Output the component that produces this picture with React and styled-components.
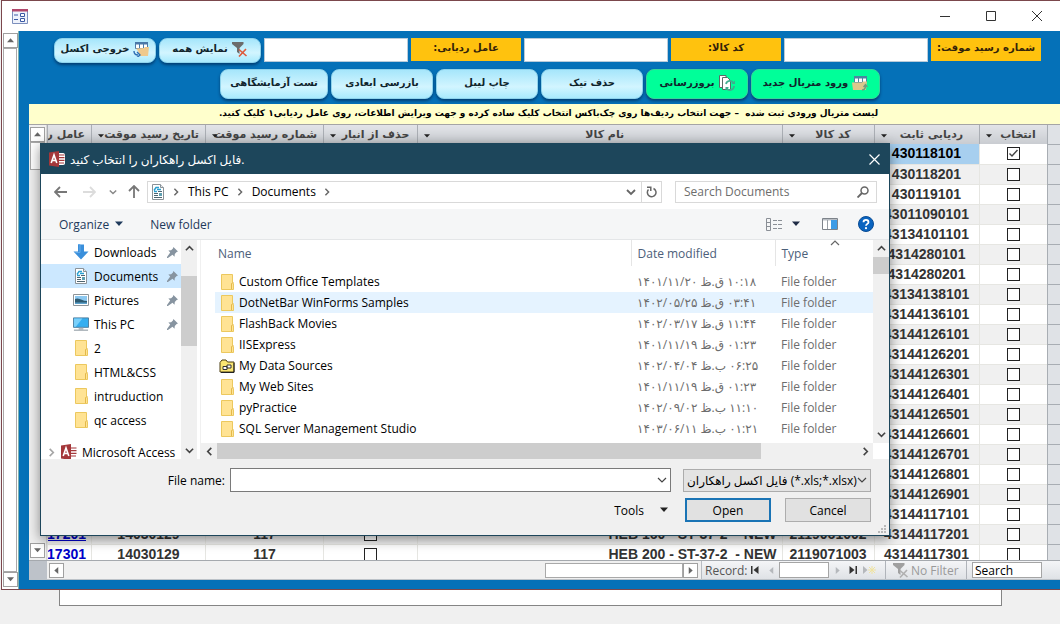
import React, { useState } from 'react'
import styled, { createGlobalStyle } from 'styled-components'

const uiFont = '"Open Sans", "DejaVu Sans", sans-serif'
const persianFont = '"DejaVu Sans", sans-serif'

const GlobalStyle = createGlobalStyle`
  * {
    box-sizing: border-box;
  }
  body {
    margin: 0;
    background: #f0f0f0;
    font-family: ${uiFont};
    font-size: 12px;
    color: #000;
  }
  button, input, select {
    font: inherit;
    color: inherit;
    margin: 0;
  }
`

const Page = styled.div`
  position: relative;
  min-height: 100vh;
  overflow: hidden;
`

const AppWindow = styled.main`
  display: flex;
  flex-direction: column;
  height: calc(100vh - 34px);
  margin-left: 1px;
  border: 1px solid #7b474c;
  border-right: 0;
  background: #fff;
`

const BackPanel = styled.div`
  height: 16px;
  margin: 0 58px 0 59px;
  background: #fff;
  border: 1px solid #858585;
  border-top: 0;
`

const TitleBar = styled.header`
  display: flex;
  align-items: center;
  height: 30px;
  flex: none;
  padding-left: 10px;
`

const WindowButtons = styled.div`
  display: flex;
  margin-left: auto;
`

const WindowButton = styled.button`
  display: flex;
  align-items: center;
  justify-content: center;
  width: 46px;
  height: 30px;
  padding: 0;
  border: 0;
  background: transparent;
`

const WindowBody = styled.div`
  display: flex;
  flex: 1;
  min-height: 0;
`

const AccessScroll = styled.div`
  display: flex;
  flex-direction: column;
  justify-content: space-between;
  flex: none;
  width: ${(p) => (p.$grey ? 18 : 17)}px;
  padding: 2px 1px;
  background: ${(p) => (p.$grey ? '#f0f0f0' : '#fff')};
  border-right: 1px solid ${(p) => (p.$grey ? '#d5d5d5' : '#7cb2b0')};
`

const ScrollButton = styled.button`
  display: flex;
  align-items: center;
  justify-content: center;
  flex: none;
  width: 15px;
  height: 15px;
  padding: 0;
  border: 1px solid #a0a0a0;
  background: #fff;
`

const ScrollTrack = styled.div`
  flex: 1;
  border: 1px solid #a9a9a9;
`

const ScrollThumb = styled.div`
  height: 28px;
  margin-bottom: auto;
  border: 1px solid #a9a9a9;
  background: #fff;
`

const Form = styled.div`
  display: flex;
  flex-direction: column;
  flex: 1;
  min-width: 0;
  background: #0571b8;
  padding: 7px 0 9px 10px;
`

const FilterRow = styled.div`
  display: flex;
  direction: rtl;
  gap: 3px;
  flex: none;
  padding-right: 19px;
  font: bold 10px/20px ${persianFont};
`

const ActionRow = styled(FilterRow)`
  padding-right: 180px;
  margin: 6px 0 5px;
`

const FilterLabel = styled.label`
  width: 110px;
  height: 23px;
  background: #ffc20e;
  color: #33220a;
  text-align: center;
`

const FilterInput = styled.input`
  width: 144px;
  height: 24px;
  padding: 0 4px;
  border: 1px solid #b9cbd9;
  background: #fff;
`

const FormButton = styled.button`
  display: flex;
  align-items: center;
  justify-content: center;
  gap: 4px;
  width: ${(p) => p.$width || 102}px;
  height: ${(p) => (p.$tall ? 30 : 25)}px;
  padding: 0 0 3px;
  border: 1px solid ${(p) => (p.$green ? '#37d69a' : '#8fd3ec')};
  border-radius: 8px;
  background: ${(p) => (p.$green ? '#00ff99' : 'linear-gradient(#a6e6fb, #d2f5ff 60%, #a9eafd)')};
  box-shadow: 0 2px 3px rgba(0, 30, 70, 0.6);
  color: #10242c;
  white-space: nowrap;
`

const Notice = styled.p`
  flex: none;
  height: 20px;
  margin: 0;
  padding-left: 8px;
  background: #ffffcc;
  direction: rtl;
  text-align: center;
  font: bold 9px/18px ${persianFont};
  white-space: nowrap;
`

const Subform = styled.div`
  display: flex;
  flex: 1;
  min-height: 0;
  border-top: 1px solid #a5a5a5;
`

const GridView = styled.div`
  flex: 1;
  min-width: 0;
  overflow: hidden;
  direction: rtl;
`

const Grid = styled.table`
  width: 100%;
  table-layout: fixed;
  border-collapse: collapse;
  background: #fff;
  font: bold 14px/19px "Liberation Sans", "DejaVu Sans", sans-serif;
  color: #333;
`

const GridHead = styled.th`
  position: relative;
  height: 19px;
  padding: 0 6px 0 ${(p) => (p.$align ? 0 : 16)}px;
  border-left: 1px solid #aaaeb4;
  background: linear-gradient(#e2e4e8, #c9ccd1);
  font: bold 11px/16px ${persianFont};
  color: #444;
  white-space: nowrap;
  overflow: hidden;
  text-align: ${(p) => p.$align || 'center'};
  svg {
    position: absolute;
    left: 6px;
    top: 8px;
  }
`

const GridCell = styled.td`
  height: 20px;
  padding: 0 5px;
  border-left: 1px solid #e6e6e2;
  border-bottom: 1px solid #e6e6e2;
  background: ${(p) => (p.$selected ? '#a7cfef' : p.$odd ? '#f0f0f0' : '#fff')};
  color: ${(p) => (p.$selected ? '#000' : 'inherit')};
  text-align: ${(p) => p.$align || 'center'};
  white-space: pre;
  overflow: hidden;
`

const RowSelector = styled.th`
  background: #dfe2e6;
  border-left: 1px solid #a8adb3;
  border-bottom: 1px solid #a8adb3;
`

const GridLink = styled.a`
  color: #0000c8;
  text-decoration: underline;
`

const Check = styled.input`
  appearance: none;
  display: block;
  width: 13px;
  height: 13px;
  margin: 0 auto;
  border: 1px solid #222;
  background: #fff;
  &:checked {
    background: #fff url("data:image/svg+xml,%3Csvg xmlns='http://www.w3.org/2000/svg' viewBox='0 0 11 11'%3E%3Cpath d='M1.5 5.5 4 8l5.500-6' fill='none' stroke='%23444' stroke-width='1.400'/%3E%3C/svg%3E");
  }
`

const NavBar = styled.div`
  display: flex;
  align-items: center;
  flex: none;
  height: 20px;
  padding-left: 20px;
  border-top: 1px solid #a5a9ae;
  border-bottom: 1px solid #bcc2c8;
  background: linear-gradient(90deg, #bdc2c9 18px, #f0f0f0 18px);
`

const NavTrack = styled.div`
  display: flex;
  justify-content: flex-end;
  flex: 1;
  height: 15px;
  padding-left: 12px;
`

const NavThumb = styled.div`
  width: 138px;
  border: 1px solid #a9a9a9;
  background: #fff;
`

const RecordNav = styled.div`
  display: flex;
  align-items: center;
  width: 359px;
  height: 18px;
  margin-left: 3px;
  padding-left: 3px;
  border-left: 1px solid #b8bcc2;
  background: linear-gradient(#f4f5f7, #dfe2e6);
  color: #555;
`

const RecordLabel = styled.label`
  width: 42px;
  white-space: nowrap;
`

const RecordButton = styled.button`
  display: flex;
  align-items: center;
  justify-content: center;
  width: 16px;
  height: 16px;
  padding: 0;
  border: 0;
  background: transparent;
`

const RecordInput = styled.input`
  width: ${(p) => p.$width || 50}px;
  height: 16px;
  padding: 0 2px;
  border: 1px solid #a5a5a5;
  background: #fff;
  color: #000;
  line-height: 14px;
  &::placeholder {
    color: #000;
    opacity: 1;
  }
`

const NoFilter = styled.button`
  display: flex;
  align-items: center;
  gap: 2px;
  width: 82px;
  height: 18px;
  margin: 0 5px 0 8px;
  padding: 0 0 0 7px;
  border: 0;
  border-left: 1px solid #b0b4ba;
  border-right: 1px solid #b0b4ba;
  background: transparent;
  color: #9a9a9a;
  white-space: nowrap;
`

const Dialog = styled.section`
  position: absolute;
  left: 40px;
  right: 170px;
  top: 143px;
  display: flex;
  flex-direction: column;
  border: 1px solid #1d465b;
  background: #fff;
  box-shadow: 0 3px 12px rgba(0, 0, 0, 0.45);
`

const DialogTitle = styled.header`
  display: flex;
  align-items: center;
  gap: 5px;
  height: 30px;
  padding: 0 0 0 8px;
  background: #1d465b;
  color: #fff;
  font-size: 12px;
`

const CloseButton = styled(WindowButton)`
  width: 30px;
  margin-left: auto;
`

const AddressRow = styled.div`
  display: flex;
  align-items: center;
  height: 35px;
  padding: 0 12px 0 5px;
`

const NavButton = styled.button`
  display: flex;
  align-items: center;
  justify-content: center;
  width: ${(p) => p.$width || 30}px;
  height: 22px;
  padding: 0;
  border: 0;
  background: transparent;
`

const AddressBox = styled.div`
  display: flex;
  align-items: center;
  flex: 1;
  height: 22px;
  margin: 0 13px 0 1px;
  padding-left: 3px;
  border: 1px solid #d9d9d9;
`

const PathIcon = styled.span`
  display: flex;
  margin-right: 7px;
`

const Crumb = styled.a`
  padding: 0 7px 0 8px;
  color: #000;
  text-decoration: none;
`

const HistoryButton = styled(NavButton)`
  width: 20px;
  margin-left: auto;
`

const RefreshButton = styled(NavButton)`
  width: 20px;
  height: 20px;
  border-left: 1px solid #d9d9d9;
`

const SearchBox = styled.label`
  display: flex;
  align-items: center;
  width: 202px;
  height: 22px;
  padding: 0 7px 0 8px;
  border: 1px solid #d9d9d9;
`

const SearchInput = styled.input`
  flex: 1;
  min-width: 0;
  padding: 0;
  border: 0;
  outline: 0;
  &::placeholder {
    color: #6d6d6d;
    opacity: 1;
  }
`

const Toolbar = styled.div`
  display: flex;
  align-items: center;
  height: 31px;
  padding: 0 15px 0 18px;
  background: #f5f6f7;
  border-bottom: 1px solid #e4e6e8;
  color: #1e395b;
`

const ToolbarButton = styled.button`
  display: flex;
  align-items: center;
  gap: ${(p) => p.$inner || 6}px;
  margin-right: ${(p) => p.$gap || 0}px;
  padding: 0;
  border: 0;
  background: transparent;
`

const ToolbarSpace = styled.div`
  flex: 1;
`

const Panes = styled.div`
  display: flex;
  height: 219px;
`

const NavPane = styled.nav`
  width: 140px;
  overflow: hidden;
`

const IconSlot = styled.span`
  display: flex;
  justify-content: center;
  flex: none;
  width: 16px;
`

const NavItem = styled.a`
  display: flex;
  align-items: center;
  gap: 5px;
  height: 24px;
  margin-top: ${(p) => (p.$group ? 8 : 0)}px;
  padding: 0 3px 0 ${(p) => (p.$group ? 6 : 32)}px;
  background: ${(p) => (p.$active ? '#cce8ff' : 'transparent')};
  color: #000;
  text-decoration: none;
  white-space: nowrap;
  svg {
    flex: none;
  }
`

const NavText = styled.span`
  flex: 1;
`

const FlatScroll = styled.div`
  display: flex;
  flex-direction: ${(p) => (p.$horizontal ? 'row' : 'column')};
  flex: none;
  background: #f0f0f0;
  ${(p) => (p.$horizontal ? 'height: 16px;' : 'width: 16px;')}
`

const FlatArrow = styled.button`
  display: flex;
  align-items: center;
  justify-content: center;
  flex: none;
  width: 16px;
  height: 17px;
  padding: 0;
  border: 0;
  background: transparent;
`

const FlatThumb = styled.div`
  background: #cdcdcd;
`

const FlatSpace = styled.div`
  flex: ${(p) => p.$grow || 1};
`

const FilePane = styled.div`
  display: flex;
  flex-direction: column;
  flex: 1;
  min-width: 0;
  margin-left: 3px;
  border-left: 1px solid #f0f0f0;
`

const FileArea = styled.div`
  display: flex;
  flex: 1;
  min-height: 0;
`

const FileView = styled.div`
  flex: 1;
  min-width: 0;
  overflow: hidden;
  padding-left: 14px;
`

const FileTable = styled.table`
  width: 100%;
  table-layout: fixed;
  border-collapse: collapse;
`

const FileHead = styled.th`
  position: relative;
  height: 26px;
  padding: 0 0 0 ${(p) => (p.$first ? 3 : 6)}px;
  border-right: ${(p) => (p.$last ? 0 : '1px solid #e5e5e5')};
  color: #4c607a;
  font-weight: normal;
  text-align: left;
  svg {
    position: absolute;
    left: 54px;
    top: -2px;
  }
`

const HeadSpace = styled.tr`
  height: 5px;
`

const FileRow = styled.tr`
  background: ${(p) => (p.$hover ? '#e5f3ff' : 'transparent')};
`

const FileCell = styled.td`
  height: 21px;
  padding: 0 0 0 6px;
  color: #6d6d6d;
  white-space: nowrap;
`

const FileName = styled.div`
  display: flex;
  align-items: center;
  gap: 4px;
  margin-left: -2px;
  color: #000;
`

const Corner = styled.div`
  width: 16px;
  height: 16px;
  background: #fff;
`

const Footer = styled.div`
  position: relative;
  display: flex;
  flex-direction: column;
  gap: 6px;
  height: 76px;
  padding: 9px 18px 0 6px;
  background: #f0f0f0;
`

const FooterRow = styled.div`
  display: flex;
  align-items: center;
  justify-content: flex-end;
`

const FileNameLabel = styled.label`
  width: 178px;
  margin-right: 5px;
  text-align: right;
`

const ComboBox = styled.div`
  display: flex;
  align-items: center;
  flex: 1;
  height: 24px;
  margin-right: 12px;
  padding-right: 3px;
  border: 1px solid #7a7a7a;
  background: #fff;
`

const ComboInput = styled.input`
  flex: 1;
  height: 20px;
  border: 0;
  outline: 0;
`

const TypeBox = styled.div`
  display: flex;
  align-items: center;
  width: 188px;
  height: 23px;
  padding-right: 3px;
  border: 1px solid #acacac;
  background: #e3e3e3;
`

const TypeSelect = styled.select`
  appearance: none;
  flex: 1;
  min-width: 0;
  height: 20px;
  padding: 0 0 0 3px;
  border: 0;
  background: transparent;
`

const DialogButton = styled.button`
  width: 86px;
  height: 24px;
  margin-left: 14px;
  padding: 0;
  border: ${(p) => (p.$primary ? '2px solid #1a74b5' : '1px solid #adadad')};
  background: #e1e1e1;
`

const Grip = styled.svg`
  position: absolute;
  right: 2px;
  bottom: 1px;
`

const Arrow = ({ dir = 'down', color = '#666', size = 7 }) => {
  const paths = {
    down: 'M0 1.500h8L4 6z',
    up: 'M0 6h8L4 1.500z',
    left: 'M6 0v8L1.500 4z',
    right: 'M2 0v8l4.500-4z'
  }
  return (
    <svg width={size} height={size} viewBox="0 0 8 8" fill={color}>
      <path d={paths[dir]} />
    </svg>
  )
}

const Chevron = ({ dir = 'down', color = '#444', size = 9, width = 1.8 }) => {
  const paths = {
    down: 'M1 3l4 4 4-4',
    up: 'M1 7l4-4 4 4',
    left: 'M7 1L3 5l4 4',
    right: 'M3 1l4 4-4 4'
  }
  return (
    <svg width={size} height={size} viewBox="0 0 10 10" fill="none" stroke={color} strokeWidth={width}>
      <path d={paths[dir]} />
    </svg>
  )
}

const FolderIcon = () => (
  <svg width="15" height="16" viewBox="0 0 15 16">
    <path d="M1.500.5h11v8l1 1v6h-12z" fill="#ffe394" stroke="#ecc85e" />
    <path d="M11.500 15V9.500l2-1" fill="none" stroke="#e3b94a" />
  </svg>
)

const DataFolderIcon = () => (
  <svg width="16" height="14" viewBox="0 0 16 14">
    <path d="M1 3.500L3 1h4l1.500 2H15v10H1z" fill="#f9e572" stroke="#4a3c10" />
    <path d="M4 7.500h4v3H4zM8 6h4v3H8z" fill="#fff" stroke="#333" />
    <path d="M15 4v9.500H2" fill="none" stroke="#222" />
  </svg>
)

const DocumentIcon = () => (
  <svg width="14" height="16" viewBox="0 0 14 16">
    <path d="M1.500.5h8l3 3v12h-11z" fill="#fff" stroke="#8a9298" />
    <path d="M9.500.5v3h3" fill="#e6eaed" stroke="#8a9298" />
    <path d="M3 6.500L5 3.500h3M3 7.500h3M6 5.500h4" fill="none" stroke="#2a9fd0" strokeWidth="1.400" />
    <path d="M7 7.500h4M3 9.500h4M3 11.500h4M3 13.500h8" stroke="#4d6470" />
    <path d="M8 9h3v3H8z" fill="#5f9fb0" />
  </svg>
)

const DownloadIcon = () => (
  <svg width="16" height="16" viewBox="0 0 16 16">
    <path d="M5 .5h6v7h4.500L8 15.500.500 7.500H5z" fill="#3a8fdb" />
    <path d="M5 .5h2v8H2.500" fill="none" stroke="#63abea" />
  </svg>
)

const PictureIcon = () => (
  <svg width="16" height="12" viewBox="0 0 16 12">
    <path d="M.5.500h15v11H.500z" fill="#fff" stroke="#8e9498" />
    <path d="M2 2h12v8H2z" fill="#8cc8f0" />
    <path d="M2 5c4-2 7 2 12 2v3H2z" fill="#2e5b72" />
    <path d="M2 8.500h12V10H2z" fill="#5da2cc" />
  </svg>
)

const ComputerIcon = () => (
  <svg width="16" height="15" viewBox="0 0 17 15">
    <path d="M.5.500h16v10H.500z" fill="#35aef0" stroke="#4c7c9c" />
    <path d="M1 1h9L3 10H1z" fill="#79d0fb" />
    <path d="M6 11h5v2H6z" fill="#b5bcc1" />
    <path d="M1 13.500h15" stroke="#7d8a94" />
  </svg>
)

const AccessIcon = () => (
  <svg width="16" height="16" viewBox="0 0 16 16">
    <path d="M9 2h5c1.500 0 2 1 2 2v8c0 1-.5 2-2 2H9z" fill="#fff" />
    <path d="M9 4h6.500M9 6.700h6.500M9 9.400h6.500M9 12h6" stroke="#a4373a" strokeWidth="1.200" />
    <path d="M0 1.500L10 0v16L0 14.500z" fill="#a4373a" />
    <path d="M2.200 12L5 4l2.800 8M3.200 9.500h3.600" fill="none" stroke="#fff" strokeWidth="1.600" />
  </svg>
)

const PinIcon = () => (
  <svg width="11" height="11" viewBox="0 0 12 12" fill="#8794a0">
    <path d="M7 0l5 5-1.500.5-2 2-.3 3L6 8.500 1 12l-1 0 0-1L3.500 6 1.500 3.800l3-.3 2-2z" />
  </svg>
)

const FormIcon = () => (
  <svg width="16" height="15" viewBox="0 0 16 15">
    <path d="M.5.500h15v14H.500z" fill="#eef2fb" stroke="#7c8fbd" />
    <path d="M0 0h16v2.500H0z" fill="#b0476c" />
    <path d="M2 6h4M2 10.500h4" stroke="#3c5aa5" />
    <path d="M8.500 4.500h4v3h-4zM8.500 9.500h4v3h-4z" fill="#fff" stroke="#3c5aa5" />
  </svg>
)

const FunnelIcon = ({ color = '#6b6b6b', cross = '#dd5a3c' }) => (
  <svg width="16" height="16" viewBox="0 0 16 16">
    <path d="M0 1h11.500v2L7.500 7v6L5 11V7L0 3z" fill={color} />
    <path d="M7 8.500l7.500 6.500M14 8l-7 7.500" stroke={cross} strokeWidth="1.600" />
  </svg>
)

const ExportIcon = () => (
  <svg width="16" height="16" viewBox="0 0 16 16">
    <path d="M2.500 1.500h12v6h-12z" fill="#fff" stroke="#4a78a8" />
    <path d="M2 1h13v2.500H2z" fill="#4a78a8" />
    <path d="M6.500 3v4M10.500 3v4" stroke="#4a78a8" />
    <path d="M3 7.500l8-.5 1-1h4l-1 9H7L5 10z" fill="#efc98c" />
    <path d="M1 10c0 3 1 4 4 4M4 11l3 3-3 2.500" fill="none" stroke="#2f6fb3" strokeWidth="1.400" />
  </svg>
)

const ImportIcon = () => (
  <svg width="16" height="16" viewBox="0 0 16 16">
    <path d="M2.500 1.500h12v6h-12z" fill="#fff" stroke="#4a87a0" />
    <path d="M2 1h13v2.500H2z" fill="#4a87a0" />
    <path d="M6.500 3v4M10.500 3v4" stroke="#4a87a0" />
    <path d="M0 7.500h10l1-1h4l-1 8.500H1z" fill="#dcc88c" />
    <path d="M10 15c3 0 3.500-2 3.500-4.500M11.500 12l2-2.500 2 2.500" fill="none" stroke="#6f9c80" strokeWidth="1.400" />
  </svg>
)

const RefreshPagesIcon = () => (
  <svg width="16" height="16" viewBox="0 0 16 16" fill="none">
    <path d="M.5.500H7v12H.500z" fill="#fff" stroke="#5a6b66" />
    <path d="M3.500 2.500h5l3 3v9h-8z" fill="#fff" stroke="#5a6b66" />
    <path d="M7 9a4 4 0 0 1 7.500-1M15 11a4 4 0 0 1-7.500 2" stroke="#3fae90" strokeWidth="1.700" />
    <path d="M16 5.500V9h-3.500zM6.500 15.500V12H10z" fill="#3fae90" />
  </svg>
)

const columns = [
  { title: 'انتخاب', width: 68 },
  { title: 'ردیابی ثابت', width: 105 },
  { title: 'کد کالا', width: 92 },
  { title: 'نام کالا' },
  { title: 'حذف از انبار', width: 94 },
  { title: 'شماره رسید موقت', width: 118 },
  { title: 'تاریخ رسید موقت', width: 114 },
  { title: 'عامل ردیابی', width: 44, align: 'right' }
]

const materials = [
  { id: '430118101' },
  { id: '430118201' },
  { id: '430119101' },
  { id: '43011090101' },
  { id: '43134101101' },
  { id: '4314280101' },
  { id: '4314280201' },
  { id: '43134138101' },
  { id: '43144136101' },
  { id: '43144126101' },
  { id: '43144126201' },
  { id: '43144126301' },
  { id: '43144126401' },
  { id: '43144126501' },
  { id: '43144126601' },
  { id: '43144126701' },
  { id: '43144126801' },
  { id: '43144126901' },
  { id: '43144117101' },
  {
    id: '43144117201',
    code: '2119061002',
    name: 'HEB 160 - ST-37-2  - NEW',
    receipt: '117',
    date: '14030129',
    factor: '17201'
  },
  {
    id: '43144117301',
    code: '2119071003',
    name: 'HEB 200 - ST-37-2  - NEW',
    receipt: '117',
    date: '14030129',
    factor: '17301'
  }
]

const places = [
  { name: 'Downloads', icon: <DownloadIcon />, pinned: true },
  { name: 'Documents', icon: <DocumentIcon />, pinned: true, active: true },
  { name: 'Pictures', icon: <PictureIcon />, pinned: true },
  { name: 'This PC', icon: <ComputerIcon />, pinned: true },
  { name: '2', icon: <FolderIcon /> },
  { name: 'HTML&CSS', icon: <FolderIcon /> },
  { name: 'intruduction', icon: <FolderIcon /> },
  { name: 'qc access', icon: <FolderIcon /> }
]

// the left-to-right mark keeps the time after the AM/PM sign
const files = [
  { name: 'Custom Office Templates', date: '۱۴۰۱/۱۱/۲۰ ق.ظ \u200e۱۰:۱۸' },
  { name: 'DotNetBar WinForms Samples', date: '۱۴۰۲/۰۵/۲۵ ق.ظ \u200e۰۳:۴۱', hover: true },
  { name: 'FlashBack Movies', date: '۱۴۰۲/۰۳/۱۷ ق.ظ \u200e۱۱:۴۴' },
  { name: 'IISExpress', date: '۱۴۰۱/۱۱/۱۹ ق.ظ \u200e۰۱:۲۳' },
  { name: 'My Data Sources', date: '۱۴۰۲/۰۴/۰۴ ب.ظ \u200e۰۶:۲۵', data: true },
  { name: 'My Web Sites', date: '۱۴۰۱/۱۱/۱۹ ق.ظ \u200e۰۱:۲۳' },
  { name: 'pyPractice', date: '۱۴۰۲/۰۹/۰۲ ب.ظ \u200e۱۱:۱۰' },
  { name: 'SQL Server Management Studio', date: '۱۴۰۳/۰۶/۱۱ ب.ظ \u200e۰۱:۲۱' }
]

const Filters = () => (
  <>
    <FilterRow>
      <FilterLabel htmlFor="receipt">شماره رسید موقت:</FilterLabel>
      <FilterInput id="receipt" />
      <FilterLabel htmlFor="code">کد کالا:</FilterLabel>
      <FilterInput id="code" />
      <FilterLabel htmlFor="factor">عامل ردیابی:</FilterLabel>
      <FilterInput id="factor" />
      <FormButton><FunnelIcon />نمایش همه</FormButton>
      <FormButton><ExportIcon />خروجی اکسل</FormButton>
    </FilterRow>
    <ActionRow>
      <FormButton $tall $green $width={129}><ImportIcon />ورود متریال جدید</FormButton>
      <FormButton $tall $green><RefreshPagesIcon />بروزرسانی</FormButton>
      <FormButton $tall>حذف تیک</FormButton>
      <FormButton $tall>چاپ لیبل</FormButton>
      <FormButton $tall>بازرسی ابعادی</FormButton>
      <FormButton $tall $width={108}>تست آزمایشگاهی</FormButton>
    </ActionRow>
  </>
)

const MaterialGrid = () => {
  const [checked, setChecked] = useState({ 0: true })
  const toggle = (i) => setChecked({ ...checked, [i]: !checked[i] })

  return (
    <GridView>
      <Grid>
        <colgroup>
          <col width="13" />
          {columns.map((c) => <col key={c.title} width={c.width} />)}
        </colgroup>
        <thead>
          <tr>
            <RowSelector aria-label="ردیف" />
            {columns.map((c) => (
              <GridHead key={c.title} $align={c.align}>
                {c.title}
                {!c.align && <Arrow color="#222" size={6} />}
              </GridHead>
            ))}
          </tr>
        </thead>
        <tbody>
          {materials.map((m, i) => {
            const odd = i % 2 === 1
            return (
              <tr key={m.id}>
                <RowSelector />
                <GridCell $odd={odd}>
                  <Check type="checkbox" aria-label={m.id} checked={!!checked[i]} onChange={() => toggle(i)} />
                </GridCell>
                <GridCell $odd={odd} $selected={i === 0}>{m.id}</GridCell>
                <GridCell $odd={odd}>{m.code}</GridCell>
                <GridCell $odd={odd} $align="right"><bdi>{m.name}</bdi></GridCell>
                <GridCell $odd={odd}>{m.code && <Check type="checkbox" aria-label={m.code} />}</GridCell>
                <GridCell $odd={odd}>{m.receipt}</GridCell>
                <GridCell $odd={odd}>{m.date}</GridCell>
                <GridCell $odd={odd} $align="right">{m.factor && <GridLink href="#">{m.factor}</GridLink>}</GridCell>
              </tr>
            )
          })}
        </tbody>
      </Grid>
    </GridView>
  )
}

const RecordBar = () => (
  <NavBar>
    <ScrollButton aria-label="left"><Arrow dir="left" /></ScrollButton>
    <NavTrack><NavThumb /></NavTrack>
    <ScrollButton aria-label="right"><Arrow dir="right" /></ScrollButton>
    <RecordNav>
      <RecordLabel htmlFor="record">Record:</RecordLabel>
      <RecordButton aria-label="first">
        <svg width="8" height="8" viewBox="0 0 8 8" fill="#333"><path d="M0 0h1.500v8H0zM7.500 0v8L2.500 4z" /></svg>
      </RecordButton>
      <RecordButton aria-label="previous"><Arrow dir="left" color="#b5b8bc" /></RecordButton>
      <RecordInput id="record" />
      <RecordButton aria-label="next"><Arrow dir="right" color="#b5b8bc" /></RecordButton>
      <RecordButton aria-label="last">
        <svg width="8" height="8" viewBox="0 0 8 8" fill="#333"><path d="M6.500 0H8v8H6.500zM.5 0v8l5-4z" /></svg>
      </RecordButton>
      <RecordButton aria-label="new">
        <svg width="13" height="9" viewBox="0 0 13 9">
          <path d="M0 0v8l4.500-4z" fill="#b5b8bc" />
          <path d="M9 0v8M5 4h8M6 1l6 6M12 1L6 7" stroke="#efe3a0" />
        </svg>
      </RecordButton>
      <NoFilter><FunnelIcon color="#a0a0a0" cross="#b0b0b0" />No Filter</NoFilter>
      <RecordInput $width={70} placeholder="Search" aria-label="Search" />
    </RecordNav>
  </NavBar>
)

const OpenDialog = () => (
  <Dialog role="dialog" aria-label="Open">
    <DialogTitle>
      <AccessIcon />
      <span>فایل اکسل راهکاران را انتخاب کنید.</span>
      <CloseButton aria-label="Close">
        <svg width="11" height="11" viewBox="0 0 11 11" stroke="#fff" strokeWidth="1.200"><path d="M.5.500l10 10M10.500.500l-10 10" /></svg>
      </CloseButton>
    </DialogTitle>

    <AddressRow>
      <NavButton $width={28} aria-label="Back">
        <svg width="13" height="12" viewBox="0 0 13 12" fill="none" stroke="#777" strokeWidth="1.800"><path d="M1 6h12M6 1L1 6l5 5" /></svg>
      </NavButton>
      <NavButton $width={30} aria-label="Forward">
        <svg width="13" height="12" viewBox="0 0 13 12" fill="none" stroke="#dcdcdc" strokeWidth="1.800"><path d="M12 6H0M7 1l5 5-5 5" /></svg>
      </NavButton>
      <NavButton $width={18} aria-label="Recent"><Chevron color="#888" size={8} /></NavButton>
      <NavButton $width={24} aria-label="Up">
        <svg width="12" height="13" viewBox="0 0 12 13" fill="none" stroke="#777" strokeWidth="1.800"><path d="M6 1v12M1 6l5-5 5 5" /></svg>
      </NavButton>
      <AddressBox>
        <PathIcon><DocumentIcon /></PathIcon>
        <Chevron dir="right" color="#666" size={8} />
        <Crumb href="#">This PC</Crumb>
        <Chevron dir="right" color="#666" size={8} />
        <Crumb href="#">Documents</Crumb>
        <Chevron dir="right" color="#666" size={8} />
        <HistoryButton aria-label="Previous locations"><Chevron color="#666" size={10} /></HistoryButton>
        <RefreshButton aria-label="Refresh">
          <svg width="11" height="12" viewBox="0 0 11 12" fill="none" stroke="#666" strokeWidth="1.500">
            <path d="M7.500 2.500A4.300 4.300 0 1 1 2.500 3.500M1 1.200h3.800V5" />
          </svg>
        </RefreshButton>
      </AddressBox>
      <SearchBox>
        <SearchInput placeholder="Search Documents" aria-label="Search Documents" />
        <svg width="12" height="12" viewBox="0 0 12 12" fill="none" stroke="#666" strokeWidth="1.500">
          <circle cx="7.500" cy="4.500" r="3.500" />
          <path d="M5 7L.5 11.500" strokeWidth="1.900" />
        </svg>
      </SearchBox>
    </AddressRow>

    <Toolbar>
      <ToolbarButton $gap={27}>Organize <Arrow color="#1e395b" size={8} /></ToolbarButton>
      <ToolbarButton>New folder</ToolbarButton>
      <ToolbarSpace />
      <ToolbarButton aria-label="View" $gap={22} $inner={9}>
        <svg width="17" height="13" viewBox="0 0 17 13" fill="none" stroke="#8a8f96">
          <path d="M.5.500h4v12h-4zM.5 4.500h4M.5 8.500h4M7 2.500h4M12 2.500h4M7 6.500h4M12 6.500h4M7 10.500h4M12 10.500h4" />
        </svg>
        <Arrow color="#1e2b45" size={8} />
      </ToolbarButton>
      <ToolbarButton aria-label="Preview pane" $gap={20}>
        <svg width="16" height="12" viewBox="0 0 16 12">
          <path d="M.5.500h15v11H.500z" fill="#fff" stroke="#7d838a" />
          <path d="M1 1h14v1.500H1z" fill="#b9bec4" />
          <path d="M5.500 2v9" stroke="#9aa0a6" />
          <path d="M9 2h6v9H9z" fill="#3c9be6" />
        </svg>
      </ToolbarButton>
      <ToolbarButton aria-label="Help">
        <svg width="16" height="16" viewBox="0 0 16 16">
          <circle cx="8" cy="8" r="7.500" fill="#0a64c0" stroke="#0a4c94" />
          <path d="M5.500 6.200c0-3.200 5-3.200 5 0 0 1.600-2.500 1.800-2.500 3.600" fill="none" stroke="#fff" strokeWidth="1.800" />
          <circle cx="8" cy="12.200" r="1.100" fill="#fff" />
        </svg>
      </ToolbarButton>
    </Toolbar>

    <Panes>
      <NavPane>
        {places.map((p) => (
          <NavItem key={p.name} href="#" $active={p.active}>
            <IconSlot>{p.icon}</IconSlot>
            <NavText>{p.name}</NavText>
            {p.pinned && <PinIcon />}
          </NavItem>
        ))}
        <NavItem href="#" $group>
          <Chevron dir="right" color="#a5a5a5" size={9} />
          <AccessIcon />
          <NavText>Microsoft Access</NavText>
        </NavItem>
      </NavPane>
      <FlatScroll>
        <FlatArrow aria-label="up"><Chevron dir="up" /></FlatArrow>
        <FlatSpace />
        <FlatThumb style={{ height: 70 }} />
        <FlatSpace $grow={5} />
        <FlatArrow aria-label="down"><Chevron /></FlatArrow>
      </FlatScroll>
      <FilePane>
        <FileArea>
          <FileView>
            <FileTable>
              <colgroup>
                <col />
                <col width="144" />
                <col width="98" />
              </colgroup>
              <thead>
                <tr>
                  <FileHead $first>Name</FileHead>
                  <FileHead>Date modified</FileHead>
                  <FileHead $last>Type<Chevron dir="up" color="#666" size={10} width={1.2} /></FileHead>
                </tr>
                <HeadSpace />
              </thead>
              <tbody>
                {files.map((f) => (
                  <FileRow key={f.name} $hover={f.hover}>
                    <FileCell>
                      <FileName>
                        <IconSlot>{f.data ? <DataFolderIcon /> : <FolderIcon />}</IconSlot>
                        <span>{f.name}</span>
                      </FileName>
                    </FileCell>
                    <FileCell>{f.date}</FileCell>
                    <FileCell>File folder</FileCell>
                  </FileRow>
                ))}
              </tbody>
            </FileTable>
          </FileView>
          <FlatScroll>
            <FlatArrow aria-label="up"><Chevron dir="up" /></FlatArrow>
            <FlatThumb style={{ height: 17 }} />
            <FlatSpace />
            <FlatArrow aria-label="down"><Chevron /></FlatArrow>
          </FlatScroll>
        </FileArea>
        <FlatScroll $horizontal>
          <FlatArrow aria-label="left"><Chevron dir="left" /></FlatArrow>
          <FlatThumb style={{ width: '79%' }} />
          <FlatSpace />
          <FlatArrow aria-label="right"><Chevron dir="right" /></FlatArrow>
          <Corner />
        </FlatScroll>
      </FilePane>
    </Panes>

    <Footer>
      <FooterRow>
        <FileNameLabel htmlFor="filename">File name:</FileNameLabel>
        <ComboBox>
          <ComboInput id="filename" />
          <Chevron size={10} width={1.2} />
        </ComboBox>
        <TypeBox>
          <TypeSelect aria-label="File type">
            <option>فایل اکسل راهکاران (*.xls;*.xlsx)</option>
          </TypeSelect>
          <Chevron size={10} width={1.2} />
        </TypeBox>
      </FooterRow>
      <FooterRow>
        <ToolbarButton $gap={3} $inner={16}>Tools<Arrow color="#222" size={8} /></ToolbarButton>
        <DialogButton $primary>Open</DialogButton>
        <DialogButton>Cancel</DialogButton>
      </FooterRow>
      <Grip width="9" height="9" fill="#b9b9b9">
        <path d="M6 0h2v2H6zM3 3h2v2H3zM6 3h2v2H6zM0 6h2v2H0zM3 6h2v2H3zM6 6h2v2H6z" />
      </Grip>
    </Footer>
  </Dialog>
)

export default function App() {
  return (
    <Page>
      <GlobalStyle />
      <AppWindow>
        <TitleBar>
          <FormIcon />
          <WindowButtons>
            <WindowButton aria-label="Minimize">
              <svg width="10" height="10" stroke="#333"><path d="M0 5.500h10" /></svg>
            </WindowButton>
            <WindowButton aria-label="Maximize">
              <svg width="10" height="10" fill="none" stroke="#333"><path d="M.5.500h9v9h-9z" /></svg>
            </WindowButton>
            <WindowButton aria-label="Close">
              <svg width="10" height="10" stroke="#333"><path d="M0 0l10 10M10 0L0 10" /></svg>
            </WindowButton>
          </WindowButtons>
        </TitleBar>
        <WindowBody>
          <AccessScroll>
            <ScrollButton aria-label="up"><Arrow dir="up" /></ScrollButton>
            <ScrollTrack />
            <ScrollButton aria-label="down"><Arrow /></ScrollButton>
          </AccessScroll>
          <Form>
            <Filters />
            <Notice>لیست متریال ورودی ثبت شده &nbsp;– جهت انتخاب ردیف‌ها روی چک‌باکس انتخاب کلیک ساده کرده و جهت ویرایش اطلاعات، روی عامل ردیابی۱ کلیک کنید.</Notice>
            <Subform>
              <AccessScroll $grey>
                <ScrollButton aria-label="up"><Arrow dir="up" /></ScrollButton>
                <ScrollThumb />
                <ScrollButton aria-label="down"><Arrow /></ScrollButton>
              </AccessScroll>
              <MaterialGrid />
            </Subform>
            <RecordBar />
          </Form>
        </WindowBody>
      </AppWindow>
      <BackPanel />
      <OpenDialog />
    </Page>
  )
}
